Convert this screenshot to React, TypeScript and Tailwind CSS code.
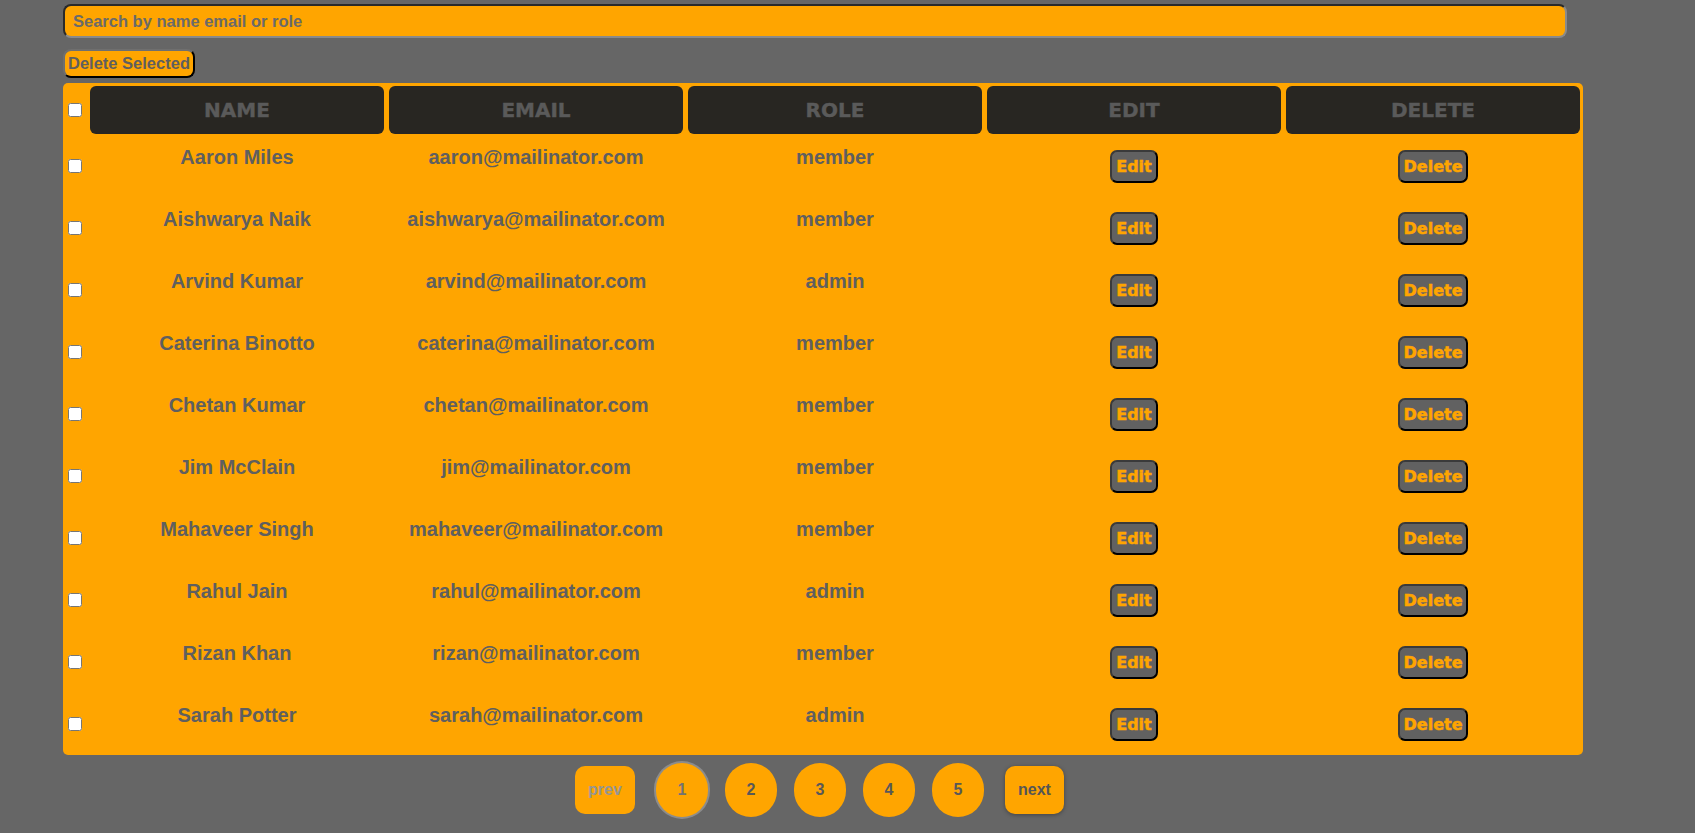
import React from "react";

const users = [
  { name: "Aaron Miles", email: "aaron@mailinator.com", role: "member" },
  { name: "Aishwarya Naik", email: "aishwarya@mailinator.com", role: "member" },
  { name: "Arvind Kumar", email: "arvind@mailinator.com", role: "admin" },
  { name: "Caterina Binotto", email: "caterina@mailinator.com", role: "member" },
  { name: "Chetan Kumar", email: "chetan@mailinator.com", role: "member" },
  { name: "Jim McClain", email: "jim@mailinator.com", role: "member" },
  { name: "Mahaveer Singh", email: "mahaveer@mailinator.com", role: "member" },
  { name: "Rahul Jain", email: "rahul@mailinator.com", role: "admin" },
  { name: "Rizan Khan", email: "rizan@mailinator.com", role: "member" },
  { name: "Sarah Potter", email: "sarah@mailinator.com", role: "admin" },
];

const headers = ["NAME", "EMAIL", "ROLE", "EDIT", "DELETE"];

function ActionButton({ label }: { label: string }) {
  return (
    <button className="h-[33px] px-[4px] rounded-[7px] bg-[#616161] border-2 border-t-[#3a3a3a] border-l-[#3a3a3a] border-r-black border-b-black text-[#ffa500] text-[16px] font-bold leading-none font-['DejaVu_Sans',sans-serif] [-webkit-text-stroke:0.5px_#ffa500]">
      {label}
    </button>
  );
}

export default function App() {
  return (
    <div className="min-h-screen bg-[#666666] font-['Liberation_Sans',Arial,sans-serif]">
      <div className="pl-[63px] pt-[4px] w-[1583px] flex flex-col items-start">
        <input
          type="text"
          placeholder="Search by name email or role"
          className="w-[1504px] h-[34px] px-[8px] rounded-[8px] bg-[#ffa500] border-2 border-t-[#2a2a2a] border-l-[#2a2a2a] border-r-[#8a8a8a] border-b-[#8a8a8a] text-[16.5px] font-bold text-[#666] placeholder:text-[#6a6a6a] outline-none"
        />
        <button className="mt-[11px] h-[29px] px-[3px] rounded-[8px] bg-[#ffa500] border-2 border-t-[#6f6f6f] border-l-[#6f6f6f] border-r-black border-b-black text-[16.5px] font-bold text-[#5f5f5f] leading-none">
          Delete Selected
        </button>

        <div className="mt-[5px] w-[1520px] bg-[#ffa500] rounded-[5px] px-[3px] pt-[3px] pb-[1px]">
          <div className="grid grid-cols-[19px_repeat(5,1fr)] gap-x-[5px] h-[48px]">
            <div className="flex items-center">
              <input type="checkbox" className="w-[14px] h-[14px] ml-[2px]" />
            </div>
            {headers.map((h) => (
              <div
                key={h}
                className="bg-[#282622] rounded-[6px] flex items-center justify-center text-[20px] font-bold text-[#5a5a5a] font-['DejaVu_Sans',sans-serif] [-webkit-text-stroke:0.4px_#5a5a5a]"
              >
                {h}
              </div>
            ))}
          </div>
          {users.map((u) => (
            <div
              key={u.email}
              className="grid grid-cols-[19px_repeat(5,1fr)] gap-x-[5px] h-[62px]"
            >
              <div className="flex items-center pt-[2px]">
                <input type="checkbox" className="w-[14px] h-[14px] ml-[2px]" />
              </div>
              <div className="pt-[12px] text-center text-[20px] leading-[23px] font-bold text-[#5f5f5f]">
                {u.name}
              </div>
              <div className="pt-[12px] text-center text-[20px] leading-[23px] font-bold text-[#5f5f5f]">
                {u.email}
              </div>
              <div className="pt-[12px] text-center text-[20px] leading-[23px] font-bold text-[#5f5f5f]">
                {u.role}
              </div>
              <div className="flex items-center justify-center pt-[3px]">
                <ActionButton label="Edit" />
              </div>
              <div className="flex items-center justify-center pt-[3px]">
                <ActionButton label="Delete" />
              </div>
            </div>
          ))}
        </div>

        <div className="mt-[8px] w-[1520px] h-[54px] flex items-center justify-center gap-[17px] pr-[7px]">
          <button className="mr-[4px] w-[60px] h-[48px] rounded-[10px] bg-[#ffa500] text-[16px] font-bold text-[#959595]">
            prev
          </button>
          <button className="w-[52px] h-[54px] rounded-full bg-[#ffa500] text-[16px] font-bold text-[#727272] shadow-[0_0_0_2px_#8c8c8c]">
            1
          </button>
          {["2", "3", "4", "5"].map((n) => (
            <button
              key={n}
              className="w-[52px] h-[54px] rounded-full bg-[#ffa500] text-[16px] font-bold text-[#585858]"
            >
              {n}
            </button>
          ))}
          <button className="ml-[4px] w-[59px] h-[48px] rounded-[10px] bg-[#ffa500] text-[16px] font-bold text-[#555] shadow-[0_1px_4px_rgba(0,0,0,0.35)]">
            next
          </button>
        </div>
      </div>
    </div>
  );
}
